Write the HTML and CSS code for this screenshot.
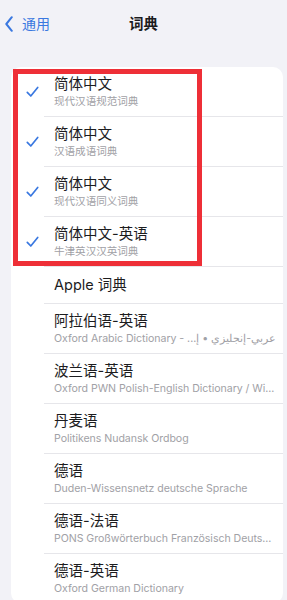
FILE: index.html
```html
<!DOCTYPE html>
<html lang="zh">
<head>
<meta charset="utf-8">
<link rel="stylesheet" href="styles.css">
</head>
<body>
<div class="nav">
  <div class="back">
    <svg class="chev" width="8" height="16" viewBox="0 0 8 16"><path d="M6.8 1.2 L1.3 8 L6.8 14.8" fill="none" stroke="#3a78e0" stroke-width="2" stroke-linecap="round" stroke-linejoin="round"/></svg>
    <span>通用</span>
  </div>
  <div class="title">词典</div>
</div>
<div class="card">
  <div class="row">
    <div class="chk"><svg width="13" height="12" viewBox="0 0 13 12"><path d="M1.3 6.3 L4.8 10 L11.7 1.5" fill="none" stroke="#3a78e0" stroke-width="1.7" stroke-linecap="round" stroke-linejoin="round"/></svg></div>
    <div class="body"><div class="t">简体中文</div><div class="s">现代汉语规范词典</div></div>
  </div>
  <div class="row">
    <div class="chk"><svg width="13" height="12" viewBox="0 0 13 12"><path d="M1.3 6.3 L4.8 10 L11.7 1.5" fill="none" stroke="#3a78e0" stroke-width="1.7" stroke-linecap="round" stroke-linejoin="round"/></svg></div>
    <div class="body"><div class="t">简体中文</div><div class="s">汉语成语词典</div></div>
  </div>
  <div class="row">
    <div class="chk"><svg width="13" height="12" viewBox="0 0 13 12"><path d="M1.3 6.3 L4.8 10 L11.7 1.5" fill="none" stroke="#3a78e0" stroke-width="1.7" stroke-linecap="round" stroke-linejoin="round"/></svg></div>
    <div class="body"><div class="t">简体中文</div><div class="s">现代汉语同义词典</div></div>
  </div>
  <div class="row">
    <div class="chk"><svg width="13" height="12" viewBox="0 0 13 12"><path d="M1.3 6.3 L4.8 10 L11.7 1.5" fill="none" stroke="#3a78e0" stroke-width="1.7" stroke-linecap="round" stroke-linejoin="round"/></svg></div>
    <div class="body"><div class="t">简体中文-英语</div><div class="s">牛津英汉汉英词典</div></div>
  </div>
  <div class="row">
    <div class="chk"></div>
    <div class="body single"><div class="t">Apple 词典</div></div>
  </div>
  <div class="row">
    <div class="chk"></div>
    <div class="body"><div class="t">阿拉伯语-英语</div><div class="s">Oxford Arabic Dictionary - عربي-إنجليزي • إ...&rlm;</div></div>
  </div>
  <div class="row">
    <div class="chk"></div>
    <div class="body"><div class="t">波兰语-英语</div><div class="s">Oxford PWN Polish-English Dictionary / Wi...</div></div>
  </div>
  <div class="row">
    <div class="chk"></div>
    <div class="body"><div class="t">丹麦语</div><div class="s">Politikens Nudansk Ordbog</div></div>
  </div>
  <div class="row">
    <div class="chk"></div>
    <div class="body"><div class="t">德语</div><div class="s">Duden-Wissensnetz deutsche Sprache</div></div>
  </div>
  <div class="row">
    <div class="chk"></div>
    <div class="body"><div class="t">德语-法语</div><div class="s">PONS Großwörterbuch Französisch Deuts...</div></div>
  </div>
  <div class="row">
    <div class="chk"></div>
    <div class="body"><div class="t">德语-英语</div><div class="s">Oxford German Dictionary</div></div>
  </div>
</div>
<div class="highlight"></div>
</body>
</html>
```
FILE: styles.css
```css
html, body {
  margin: 0;
  padding: 0;
}
body {
  background: #f2f2f7;
  font-family: "Inter", "Noto Sans CJK SC", sans-serif;
  color: #1c1c1e;
  width: 287px;
  height: 600px;
  overflow: hidden;
  position: relative;
}
.nav {
  height: 45px;
  box-sizing: border-box;
  padding-top: 3px;
  display: flex;
  align-items: center;
  position: relative;
}
.back {
  display: flex;
  align-items: center;
  gap: 9px;
  padding-left: 5px;
  color: #3a78e0;
  font-size: 14px;
  line-height: 18px;
}
.chev {
  display: block;
}
.title {
  position: absolute;
  left: 0;
  right: 0;
  text-align: center;
  font-size: 14.5px;
  font-weight: 700;
  line-height: 18px;
  pointer-events: none;
}
.card {
  margin: 22px 4px 0 11px;
  background: #ffffff;
  border-radius: 10px;
  overflow: hidden;
}
.row {
  display: flex;
}
.chk {
  width: 33px;
  flex: none;
  display: flex;
  align-items: center;
}
.chk svg {
  display: block;
  margin-left: 15px;
}
.body {
  flex: 1;
  padding: 8px 0 7px 10px;
  border-bottom: 1px solid #e6e6ea;
  min-width: 0;
}
.row:last-child .body {
  border-bottom: none;
}
.body.single {
  padding: 9px 0 9px 10px;
}
.t {
  font-size: 14.5px;
  line-height: 18px;
  white-space: nowrap;
}
.s {
  margin-top: 2px;
  font-size: 10.6px;
  letter-spacing: -0.05px;
  line-height: 14px;
  color: #a1a1a6;
  white-space: nowrap;
  overflow: hidden;
}
.highlight {
  position: absolute;
  left: 13px;
  top: 69px;
  width: 189px;
  height: 197px;
  box-sizing: border-box;
  border: 5.5px solid #ee2f37;
}
```
